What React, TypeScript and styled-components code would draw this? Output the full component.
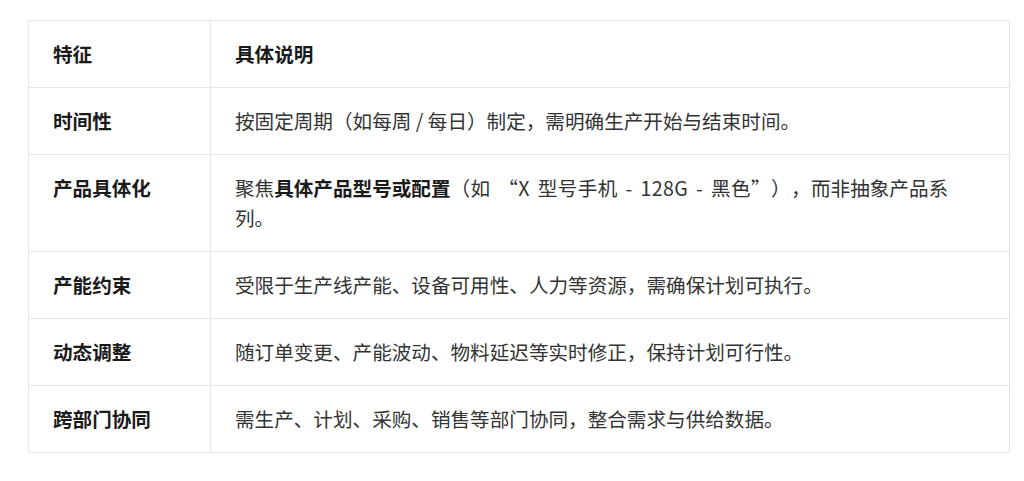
import { createGlobalStyle, styled } from "styled-components";

const GlobalStyle = createGlobalStyle`
    html, body {
        margin: 0;
        padding: 0;
        background: #ffffff;
    }
    body {
        font-family: "Noto Sans CJK SC", "Noto Sans", sans-serif;
    }
`;

const Page = styled.div`
    padding: 20px 14px 20px 28px;
`;

const Table = styled.table`
    width: 982px;
    border-collapse: collapse;
    table-layout: fixed;
    border: 1px solid #e6e6e6;
    font-size: 19.6px;
    line-height: 30px;
    color: #333333;
    /* 전각 구두점을 줄이지 않음 */
    text-spacing-trim: space-all;
`;

const Cell = styled.td<{ $head?: boolean }>`
    border: 1px solid #e6e6e6;
    padding: 18px 22px 18px 24px;
    vertical-align: top;
    text-align: left;
    font-weight: ${props => props.$head ? 700 : 400};
    color: ${props => props.$head ? '#1a1a1a' : '#333333'};
`;

const Strong = styled.strong`
    font-weight: 700;
    color: #1a1a1a;
`;

// 예시 문구(괄호 안)는 라틴 글자 간격이 넓음
const Example = styled.span`
    word-spacing: 3px;
    letter-spacing: 0.4px;
`;

interface IRow {
    feature: string;
    desc: React.ReactNode;
}

const rows: IRow[] = [
    { feature: '时间性', desc: '按固定周期（如每周 / 每日）制定，需明确生产开始与结束时间。' },
    {
        feature: '产品具体化',
        desc: <>聚焦<Strong>具体产品型号或配置</Strong><Example>（如 “X 型号手机 - 128G - 黑色”），</Example>而非抽象产品系列。</>,
    },
    { feature: '产能约束', desc: '受限于生产线产能、设备可用性、人力等资源，需确保计划可执行。' },
    { feature: '动态调整', desc: '随订单变更、产能波动、物料延迟等实时修正，保持计划可行性。' },
    { feature: '跨部门协同', desc: '需生产、计划、采购、销售等部门协同，整合需求与供给数据。' },
];

const App = () => {
    return (
        <Page lang="zh-CN">
            <GlobalStyle />
            <Table>
                <colgroup>
                    <col style={{ width: 182 }} />
                    <col />
                </colgroup>
                <thead>
                    <tr>
                        <Cell as="th" $head>特征</Cell>
                        <Cell as="th" $head>具体说明</Cell>
                    </tr>
                </thead>
                <tbody>
                    {rows.map((row) => (
                        <tr key={row.feature}>
                            <Cell $head>{row.feature}</Cell>
                            <Cell>{row.desc}</Cell>
                        </tr>
                    ))}
                </tbody>
            </Table>
        </Page>
    );
}

export default App;
